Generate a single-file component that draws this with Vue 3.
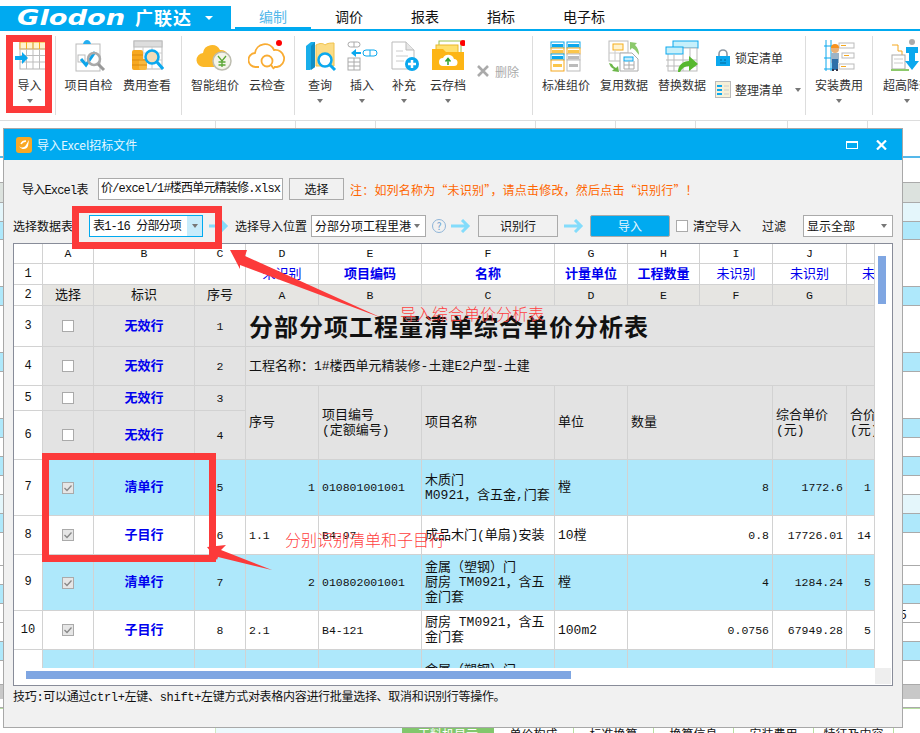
<template>
  <div class="app">
    <!-- 顶部标签 -->
    <header class="topbar">
      <div class="logo">
        <span class="logo-en">Glodon</span>
        <span class="logo-cn">广联达</span>
        <i class="logo-caret"></i>
      </div>
      <nav class="tabs">
        <a v-for="(t, i) in tabs" :key="t" :class="['tab', { active: i === 0, wide: i === 4 }]">{{ t }}</a>
      </nav>
    </header>

    <!-- 功能区 -->
    <section class="ribbon">
      <div class="tool w43">
        <svg viewBox="0 0 34 34" class="ico">
          <rect x="7" y="3" width="26" height="27" fill="#fff" stroke="#b5b5b5" />
          <rect x="7" y="3" width="26" height="7" fill="#fff3cf" stroke="#f5ae1e" />
          <path d="M13.5 3v27M20 3v27M26.500 3v27M7 10h26M7 16.500h26M7 23h26" stroke="#bdbdbd" fill="none" />
          <path d="M13.500 3v7M20 3v7M26.500 3v7" stroke="#f5ae1e" />
          <path d="M2 17h7v-4l6 6-6 6v-4H2z" fill="#0ba8ee" />
        </svg>
        <span>导入</span><i class="caret"></i>
      </div>
      <div class="sep"></div>
      <div class="tool w57">
        <svg viewBox="0 0 34 34" class="ico">
          <rect x="4" y="5" width="24" height="27" fill="#fff" stroke="#bbb" />
          <path d="M11 5c1-3 2-4 4-4s3 1 4 4z" fill="#25aef0" />
          <rect x="6" y="16" width="7" height="7" fill="#fff" stroke="#bbb" />
          <path d="M9 20l5 6 9-13" fill="none" stroke="#0ea5ea" stroke-width="3" />
          <circle cx="22" cy="20" r="6" fill="none" stroke="#aaa" stroke-width="2.500" />
          <path d="M26 25l6 6" stroke="#999" stroke-width="3" />
        </svg>
        <span>项目自检</span>
      </div>
      <div class="tool w60">
        <svg viewBox="0 0 34 34" class="ico">
          <rect x="4" y="2" width="28" height="28" fill="#fff" stroke="#bbb" />
          <rect x="4" y="2" width="28" height="6" fill="#ddd" stroke="#bbb" />
          <path d="M4 14h28M4 21h28M13 8v22M22 8v22" stroke="#ccc" />
          <rect x="2" y="11" width="11" height="20" rx="2" fill="#f7a820" />
          <rect x="9" y="20" width="8" height="11" rx="2" fill="#f9b93f" />
          <path d="M2 16h11M2 21h15M2 26h15" stroke="#d98a10" />
          <circle cx="22" cy="18" r="6.500" fill="#f4dcb8" stroke="#0ba8ee" stroke-width="2.500" />
          <path d="M27 23l6 7" stroke="#0ba8ee" stroke-width="3" />
        </svg>
        <span>费用查看</span>
      </div>
      <div class="sep"></div>
      <div class="tool w58">
        <svg viewBox="0 0 38 34" class="ico wide-ico">
          <path d="M8 28a7 7 0 0 1-1-14 9 9 0 0 1 17-3 8 8 0 0 1 8 5v12z" fill="#fbb829" />
          <circle cx="26" cy="22" r="9" fill="#f4f4ea" stroke="#bdbdb0" stroke-width="1.500" />
          <path d="M22 17l4 5 4-5M26 22v6M22.500 23h7M22.500 26h7" stroke="#5aa735" stroke-width="1.300" fill="none" />
        </svg>
        <span>智能组价</span>
      </div>
      <div class="tool w46">
        <svg viewBox="0 0 38 34" class="ico wide-ico">
          <path d="M11 28H8a7 7 0 0 1-1-14 10 10 0 0 1 19-3 8.500 8.500 0 0 1 3 17h-3" fill="none" stroke="#f9ac33" stroke-width="1.800" />
          <circle cx="19" cy="22" r="5.500" fill="none" stroke="#f9ac33" stroke-width="1.800" />
          <path d="M23 26l3 4" stroke="#f9ac33" stroke-width="2" />
          <circle cx="31" cy="4" r="3" fill="#f00" />
        </svg>
        <span>云检查</span>
      </div>
      <div class="sep"></div>
      <div class="tool w42">
        <svg viewBox="0 0 34 34" class="ico">
          <path d="M3 7l5-4h4v25l-5 3H3z" fill="#19aeea" />
          <path d="M8 7l4-4v25l-4 3z" fill="#0f8ec4" />
          <path d="M13 6c4-2 7-2 9 0 2-2 6-2 9-2v23H13z" fill="#fbdc86" stroke="#f0c24b" />
          <circle cx="22" cy="21" r="6.500" fill="#fff" stroke="#0ba8ee" stroke-width="2.500" />
          <path d="M27 26l5 5" stroke="#0ba8ee" stroke-width="3" />
        </svg>
        <span>查询</span><i class="caret"></i>
      </div>
      <div class="tool w42">
        <svg viewBox="0 0 34 34" class="ico">
          <rect x="3" y="3" width="12" height="5" rx="2.500" fill="#fff" stroke="#aaa" />
          <path d="M9 3v5" stroke="#aaa" />
          <path d="M6 14l5-4v3h5v2h-5v3z" fill="#0ba8ee" />
          <rect x="18" y="11" width="14" height="6" rx="3" fill="#fff" stroke="#0ba8ee" />
          <path d="M25 11v6" stroke="#0ba8ee" />
          <rect x="3" y="19" width="12" height="12" fill="#fff" stroke="#aaa" />
          <path d="M3 23h12M3 27h12M9 19v12" stroke="#aaa" />
        </svg>
        <span>插入</span><i class="caret"></i>
      </div>
      <div class="tool w42">
        <svg viewBox="0 0 34 34" class="ico">
          <path d="M5 3h14l8 8v19H5z" fill="#fff" stroke="#bbb" />
          <path d="M19 3v8h8" fill="#e6e6e6" stroke="#bbb" />
          <path d="M9 12h7M9 17h12M9 22h8" stroke="#ccc" />
          <circle cx="25" cy="25" r="7" fill="#0ba8ee" />
          <path d="M21 25h8M25 21v8" stroke="#fff" stroke-width="2.500" />
        </svg>
        <span>补充</span><i class="caret"></i>
      </div>
      <div class="tool w46">
        <svg viewBox="0 0 34 34" class="ico">
          <rect x="8" y="2" width="22" height="14" fill="#fff" stroke="#9bc24a" />
          <rect x="5" y="6" width="22" height="12" fill="#ffe06e" stroke="#e9b82c" />
          <path d="M1 10h11l3 3h18v18H1z" fill="#fdb515" />
          <path d="M12 27a4 4 0 0 1 0-8 6 6 0 0 1 11 1 3.500 3.500 0 0 1 0 7z" fill="#fff" />
          <path d="M17 26v-6M14.500 22.500l2.500-3 2.500 3" stroke="#2ca02c" stroke-width="1.500" fill="none" />
          <circle cx="32" cy="4" r="3" fill="#f00" />
        </svg>
        <span>云存档</span><i class="caret"></i>
      </div>
      <div class="tool-inline w57">
        <svg viewBox="0 0 12 12" class="del"><path d="M1 1l10 10M11 1L1 11" stroke="#aaa" stroke-width="2.600" /></svg>
        <span>删除</span>
      </div>
      <div class="sep"></div>
      <div class="tool w58">
        <svg viewBox="0 0 34 34" class="ico">
          <g fill="#fff" stroke="#0ba8ee"><rect x="2" y="3" width="13" height="6" /><rect x="18" y="3" width="13" height="6" /></g>
          <rect x="3" y="5" width="11" height="3" fill="#0ba8ee" /><rect x="19" y="5" width="11" height="3" fill="#0ba8ee" />
          <g fill="#fff" stroke="#f5a81e"><rect x="2" y="9" width="13" height="6" /><rect x="18" y="9" width="13" height="6" /></g>
          <rect x="3" y="11" width="11" height="3" fill="#fbc64a" /><rect x="19" y="11" width="11" height="3" fill="#fbc64a" />
          <rect x="2" y="15" width="13" height="6" fill="#fff" stroke="#0ba8ee" /><rect x="3" y="17" width="11" height="3" fill="#0ba8ee" />
          <rect x="18" y="15" width="13" height="6" fill="#fff" stroke="#bbb" /><rect x="19" y="17" width="11" height="3" fill="#bbb" />
          <rect x="2" y="21" width="13" height="11" fill="#fff" stroke="#f5a81e" /><rect x="4" y="25" width="9" height="3" fill="#fbc64a" />
          <rect x="18" y="21" width="13" height="11" fill="#fff" stroke="#bbb" /><rect x="20" y="25" width="9" height="3" fill="#bbb" />
        </svg>
        <span>标准组价</span>
      </div>
      <div class="tool w58">
        <svg viewBox="0 0 34 34" class="ico">
          <rect x="2" y="2" width="19" height="20" fill="#fff" stroke="#bbb" />
          <rect x="6" y="5" width="10" height="6" fill="#fff3cf" stroke="#f5ae1e" />
          <path d="M2 14h19M8 11v11" stroke="#ccc" />
          <path d="M13 14h12l6 6v12H13z" fill="#fff" stroke="#aaa" />
          <rect x="17" y="18" width="9" height="4" fill="#c6ecfb" stroke="#0ba8ee" />
          <path d="M17 22v8h10v-8M22 22v8M17 26h10" stroke="#aaa" fill="none" />
          <path d="M23 3l7 1-2 2c3 3 4 6 4 10l-4-5-3-2-2 2z" fill="#8cc96b" />
          <path d="M2 24l3 1c1 2 2 3 4 4l2-2 1 6-7-1 2-2c-3-1-4-3-5-6z" fill="#6cb64a" />
        </svg>
        <span>复用数据</span>
      </div>
      <div class="tool w58">
        <svg viewBox="0 0 34 34" class="ico">
          <rect x="8" y="2" width="25" height="7" fill="#c6f0fb" stroke="#0ba8ee" />
          <rect x="3" y="9" width="29" height="23" fill="#fff" stroke="#bbb" />
          <rect x="1" y="8" width="17" height="7" fill="#c6f0fb" stroke="#0ba8ee" />
          <path d="M1 21h31M1 27h31M9 15v17M18 15v17M25 9v23" stroke="#bbb" />
          <path d="M13 33c0-7 5-11 11-11v-5l9 8-9 7v-5c-4 0-7 2-9 6z" fill="#57b82f" />
        </svg>
        <span>替换数据</span>
      </div>
      <div class="stack">
        <div class="stack-row">
          <svg viewBox="0 0 16 17" class="mini">
            <path d="M4 8V5a4 4 0 0 1 8 0v3" fill="none" stroke="#8a97a3" stroke-width="1.600" />
            <rect x="1" y="7" width="14" height="10" fill="#0ba8ee" />
            <path d="M5 11h2M9 11h2M5 14h6" stroke="#05689a" />
          </svg>
          <span>锁定清单</span>
        </div>
        <div class="stack-row">
          <svg viewBox="0 0 16 17" class="mini">
            <rect x="0.500" y="0.500" width="15" height="16" fill="#f6f0d8" stroke="#bbb" />
            <rect x="2" y="4" width="5" height="2" fill="#0ba8ee" /><rect x="2" y="8" width="5" height="2" fill="#0ba8ee" /><rect x="2" y="12" width="5" height="2" fill="#0ba8ee" />
            <path d="M9 5h5M9 9h5M9 13h5" stroke="#ccc" />
          </svg>
          <span>整理清单</span>
          <i class="caret side"></i>
        </div>
      </div>
      <div class="sep"></div>
      <div class="tool w58">
        <svg viewBox="0 0 34 34" class="ico">
          <path d="M4 1v31M9 1v31" stroke="#0ba8ee" />
          <path d="M2 7h9M2 19h9M2 30h9" stroke="#0ba8ee" />
          <rect x="17" y="4" width="15" height="5" fill="#fff" stroke="#bbb" /><path d="M19 6.500h5" stroke="#f5a81e" />
          <rect x="20" y="14" width="12" height="5" fill="#fff" stroke="#bbb" /><path d="M22 16.500h5" stroke="#f5a81e" />
          <rect x="17" y="25" width="15" height="5" fill="#fff" stroke="#bbb" /><path d="M19 27.500h5" stroke="#f5a81e" />
          <circle cx="13" cy="10" r="4" fill="#e8b27a" />
          <path d="M9 9a4 4 0 0 1 8 0z" fill="#f6921e" />
          <path d="M9 14h8v10H9z" fill="#9cb4c8" />
          <path d="M10 20h6v11h-6z" fill="#2d6fa8" />
          <path d="M10 31h2M14 31h2" stroke="#334" stroke-width="2" />
        </svg>
        <span>安装费用</span><i class="caret"></i>
      </div>
      <div class="sep"></div>
      <div class="tool w60">
        <svg viewBox="0 0 34 34" class="ico">
          <path d="M2 6h6v6h4v16" fill="none" stroke="#f5a81e" />
          <rect x="2" y="16" width="13" height="14" fill="#fff" stroke="#aaa" />
          <path d="M4 20h9M4 24h9" stroke="#ccc" />
          <path d="M1 31h18" stroke="#8cc96b" stroke-width="2" />
          <circle cx="22" cy="3" r="3" fill="#aaa" />
          <path d="M16 8h12v6h-3v8h4l-7 9-7-9h4v-8h-3z" fill="#0ba8ee" />
        </svg>
        <span>超高降效</span><i class="caret"></i>
      </div>
    </section>

    <!-- 被弹窗挡住的清单表 -->
    <section class="sheet">
      <div class="ruler"><i v-for="(w, i) in rulerCols" :key="i" :class="'rc' + w"></i></div>
      <div class="sheet-line"></div>
      <div
        v-for="(r, i) in sheetRows"
        :key="i"
        :class="['sheet-row', r.kind]"
        :style="{ height: r.h + 'px' }"
      >{{ r.text }}</div>
      <div class="bottom-tabs">
        <span class="bt-blank"></span>
        <span class="bt-panel"></span>
        <span class="bt on">工料机显示</span>
        <span class="bt">单价构成</span>
        <span class="bt">标准换算</span>
        <span class="bt">换算信息</span>
        <span class="bt">安装费用</span>
        <span class="bt">特征及内容</span>
        <span class="bt"></span>
      </div>
    </section>

    <!-- 弹窗 -->
    <div class="dialog">
      <div class="dlg-head">
        <svg viewBox="0 0 16 16" class="dlg-ico">
          <rect width="16" height="16" rx="3" fill="#f9a825" />
          <path d="M3 9c3 3 6 1 7-1l3-5-1 6c-1 3-6 5-9 0z" fill="#fff" />
          <path d="M5 7c1-2 3-3 5-3" stroke="#fff" stroke-width="1.500" fill="none" />
        </svg>
        <span class="dlg-title">导入Excel招标文件</span>
        <svg viewBox="0 0 12 8" class="win-max"><rect x="0.500" y="0.500" width="11" height="7" fill="none" stroke="#fff" /><rect width="12" height="2" fill="#fff" /></svg>
        <svg viewBox="0 0 11 10" class="win-close"><path d="M1 0.500l9 9M10 0.500l-9 9" stroke="#fff" stroke-width="2.200" /></svg>
      </div>

      <div class="form-row first">
        <span class="lbl-file">导入Excel表</span>
        <div class="file-input">价/excel/1#楼西单元精装修.xlsx</div>
        <button class="btn pick">选择</button>
        <span class="warn">注：如列名称为“未识别”，请点击修改，然后点击“识别行”！</span>
      </div>

      <div class="form-row second">
        <span class="lbl w60l">选择数据表</span>
        <div class="combo sel-a">
          <span>表1-16 分部分项</span>
          <b class="combo-btn"><i class="caret"></i></b>
        </div>
        <svg viewBox="0 0 20 14" class="flow a1"><path d="M0 7h17M11 1l6 6-6 6" fill="none" stroke="#84dcfb" stroke-width="3" /></svg>
        <span class="lbl pos">选择导入位置</span>
        <div class="combo sel-b"><span>分部分项工程里港</span><i class="caret"></i></div>
        <span class="help">?</span>
        <svg viewBox="0 0 20 14" class="flow a2"><path d="M0 7h17M11 1l6 6-6 6" fill="none" stroke="#84dcfb" stroke-width="3" /></svg>
        <button class="btn rec">识别行</button>
        <svg viewBox="0 0 20 14" class="flow a3"><path d="M0 7h17M11 1l6 6-6 6" fill="none" stroke="#84dcfb" stroke-width="3" /></svg>
        <button class="btn primary">导入</button>
        <i class="check clear"></i>
        <span class="lbl clear-t">清空导入</span>
        <span class="lbl filter">过滤</span>
        <div class="combo sel-c"><span>显示全部</span><i class="caret"></i></div>
      </div>

      <div class="frame">
        <div class="grid-wrap">
          <table class="grid">
            <colgroup>
              <col v-for="w in colWidths" :key="w.k" :style="{ width: w.v + 'px' }" />
            </colgroup>
            <tr class="r-head">
              <td class="rh"></td>
              <td v-for="(c, i) in letters" :key="i" class="letter">{{ c }}</td>
            </tr>
            <tr class="r1">
              <td class="rh">1</td><td></td><td></td><td></td>
              <td class="c un">未识别</td><td class="c key">项目编码</td><td class="c key">名称</td>
              <td class="c key">计量单位</td><td class="c key">工程数量</td>
              <td class="c un">未识别</td><td class="c un">未识别</td><td class="un cut">未识别</td>
            </tr>
            <tr class="r2 grey2">
              <td class="rh">2</td><td class="c">选择</td><td class="c">标识</td><td class="c">序号</td>
              <td v-for="c in subLetters" :key="c" class="letter">{{ c }}</td><td></td>
            </tr>
            <tr class="r3 grey">
              <td class="rh">3</td><td><i class="check"></i></td><td class="c key">无效行</td><td class="c num">1</td>
              <td colspan="8" class="title">分部分项工程量清单综合单价分析表</td>
            </tr>
            <tr class="r4 grey">
              <td class="rh">4</td><td><i class="check"></i></td><td class="c key">无效行</td><td class="c num">2</td>
              <td colspan="8">工程名称：1#楼西单元精装修-土建E2户型-土建</td>
            </tr>
            <tr class="r5 grey">
              <td class="rh">5</td><td><i class="check"></i></td><td class="c key">无效行</td><td class="c num">3</td>
              <td rowspan="2">序号</td><td rowspan="2">项目编号<br />(定额编号)</td><td rowspan="2">项目名称</td>
              <td rowspan="2">单位</td><td rowspan="2" colspan="2">数量</td>
              <td rowspan="2">综合单价<br />(元)</td><td rowspan="2">合价<br />(元)</td>
            </tr>
            <tr class="r6 grey">
              <td class="rh">6</td><td><i class="check"></i></td><td class="c key">无效行</td><td class="c num">4</td>
            </tr>
            <tr v-for="(row, i) in dataRows" :key="i" :class="{ blue: row.blue }" :style="{ height: row.h + 'px' }">
              <td class="rh">{{ row.no }}</td>
              <td><i v-if="row.tag" class="check on"><svg viewBox="0 0 10 10"><path d="M1.500 5l2.500 2.500 4.500-5" fill="none" stroke="#888" stroke-width="1.300" /></svg></i></td>
              <td class="c key">{{ row.tag }}</td>
              <td class="c num">{{ row.seq }}</td>
              <td :class="row.parent ? 'r num' : 'num'">{{ row.d }}</td>
              <td class="num">{{ row.e }}</td>
              <td class="multi">{{ row.f }}</td>
              <td>{{ row.g }}</td>
              <td colspan="2" class="r num">{{ row.h2 }}</td>
              <td class="r num">{{ row.j }}</td>
              <td class="r num">{{ row.k }}</td>
            </tr>
          </table>
        </div>
        <div class="vbar"><i></i></div>
        <div class="hbar"><i></i></div>
        <div class="corner"></div>
      </div>

      <p class="tip">技巧:可以通过ctrl+左键、shift+左键方式对表格内容进行批量选择、取消和识别行等操作。</p>
    </div>

    <!-- 截图上的红色标注 -->
    <svg class="marks" viewBox="0 0 920 733">
      <g fill="none" stroke="#fc3a3a" stroke-width="7">
        <rect x="9.500" y="38.500" width="39" height="71" />
        <rect x="75.500" y="209.500" width="143" height="36" />
        <rect x="45.500" y="456.500" width="167" height="102" />
      </g>
      <path d="M230 250l17 0-2 6 137 62-142-53 0 4z" fill="#fc3a3a" />
      <path d="M207 547l19-2-5 5 51 20-54-13-1 3z" fill="#fc3a3a" />
    </svg>
    <span class="mark-text t1">导入综合单价分析表</span>
    <span class="mark-text t2">分别识别清单和子目行</span>
  </div>
</template>

<script setup>
const tabs = ['编制', '调价', '报表', '指标', '电子标']

const rulerCols = [215, 80, 80, 160, 80, 80, 92, 80, 53]

const sheetRows = [
  { h: 25, kind: 'plain', text: ':' },
  { h: 20, kind: 'head' },
  { h: 19, kind: 'light' },
  { h: 18, kind: 'sky' },
  { h: 47, kind: 'plain' },
  { h: 19, kind: 'sky' },
  { h: 47, kind: 'plain' },
  { h: 19, kind: 'sky' },
  { h: 47, kind: 'plain' },
  { h: 19, kind: 'sky' },
  { h: 19, kind: 'plain' },
  { h: 19, kind: 'sky' },
  { h: 19, kind: 'plain' },
  { h: 19, kind: 'light' },
  { h: 19, kind: 'sky' },
  { h: 33, kind: 'plain' },
  { h: 19, kind: 'plain' },
  { h: 19, kind: 'sky' },
  { h: 19, kind: 'plain', text: '5' },
  { h: 19, kind: 'plain' },
  { h: 19, kind: 'sky' },
  { h: 24, kind: 'plain' },
  { h: 14, kind: 'foot' },
  { h: 9, kind: 'plain' }
]

const colWidths = [29, 51, 101, 51, 73, 103, 133, 73, 72, 73, 74, 28].map((v, k) => ({ k, v }))
const letters = ['A', 'B', 'C', 'D', 'E', 'F', 'G', 'H', 'I', 'J', '']
const subLetters = ['A', 'B', 'C', 'D', 'E', 'F', 'G']

const dataRows = [
  { no: 7, h: 56, blue: true, parent: true, tag: '清单行', seq: 5, d: '1', e: '010801001001', f: '木质门\nM0921，含五金,门套', g: '樘', h2: '8', j: '1772.6', k: '1' },
  { no: 8, h: 39, tag: '子目行', seq: 6, d: '1.1', e: 'B4-97', f: '成品木门(单扇)安装', g: '10樘', h2: '0.8', j: '17726.01', k: '14' },
  { no: 9, h: 56, blue: true, parent: true, tag: '清单行', seq: 7, d: '2', e: '010802001001', f: '金属（塑钢）门\n厨房 TM0921，含五\n金门套', g: '樘', h2: '4', j: '1284.24', k: '5' },
  { no: 10, h: 39, tag: '子目行', seq: 8, d: '2.1', e: 'B4-121', f: '厨房 TM0921，含五\n金门套', g: '100m2', h2: '0.0756', j: '67949.28', k: '5' },
  { no: '', h: 56, blue: true, tag: '', seq: '', d: '', e: '', f: '金属（塑钢）门\n \n ', g: '', h2: '', j: '', k: '' }
]
</script>

<style>
html, body {
  margin: 0;
  background: #fff;
}
</style>

<style scoped>
.app {
  position: relative;
  width: 920px;
  height: 733px;
  overflow: hidden;
  background: #fff;
  color: #333;
  font: 12px "Noto Sans CJK SC", "Liberation Sans", sans-serif;
}

/* === 顶部 === */
.topbar {
  display: flex;
  height: 31px;
  box-sizing: border-box;
  padding-top: 6px;
  border-bottom: 2px solid #00aaf0;
}
.logo {
  display: flex;
  align-items: center;
  width: 231px;
  padding-left: 17px;
  box-sizing: border-box;
  background: #00aaf0;
  color: #fff;
  white-space: nowrap;
}
.logo-en {
  font: italic 700 22px/23px "DejaVu Sans", sans-serif;
  width: 118px;
  transform-origin: left center;
  transform: scaleX(1.24);
}
.logo-cn {
  font-size: 18px;
  line-height: 23px;
  font-weight: 700;
  letter-spacing: 1px;
}
.logo-caret {
  width: 0;
  height: 0;
  margin-left: 13px;
  border: 4px solid transparent;
  border-top-color: #fff;
  border-bottom: 0;
}
.tabs {
  display: flex;
  padding-left: 4px;
}
.tab {
  width: 76px;
  height: 23px;
  line-height: 21px;
  text-align: center;
  font-size: 14px;
  color: #111;
}
.tab.wide {
  width: 90px;
}
.tab.active {
  box-sizing: border-box;
  color: #55b8ea;
  border-bottom: 2px solid #00aaf0;
}

/* === 功能区 === */
.ribbon {
  display: flex;
  height: 90px;
  box-sizing: border-box;
  padding: 5px 0 5px 8px;
  border-bottom: 1px solid #ddd;
  overflow: hidden;
}
.sep {
  flex: none;
  width: 1px;
  margin: 0 4px;
  background: #ddd;
}
.tool {
  flex: none;
  display: flex;
  flex-direction: column;
  align-items: center;
  padding-top: 3px;
  white-space: nowrap;
}
.tool > span {
  margin-top: 4px;
  line-height: 16px;
}
.w42 { width: 42px; }
.w43 { width: 43px; }
.w46 { width: 46px; }
.w57 { width: 57px; }
.w58 { width: 58px; }
.w60 { width: 60px; }
.ico {
  width: 34px;
  height: 34px;
  flex: none;
}
.wide-ico {
  width: 38px;
}
.caret {
  display: block;
  width: 0;
  height: 0;
  border: 3.5px solid transparent;
  border-top: 4px solid #777;
  border-bottom: 0;
}
.tool .caret {
  margin-top: 6px;
}
.tool-inline {
  flex: none;
  display: flex;
  align-items: center;
  box-sizing: border-box;
  padding: 0 0 9px 6px;
  color: #aaa;
}
.del {
  width: 12px;
  height: 12px;
  margin-right: 6px;
}
.stack {
  flex: none;
  width: 90px;
  box-sizing: border-box;
  padding: 13px 0 0 4px;
}
.stack-row {
  display: flex;
  align-items: center;
  height: 17px;
  margin-bottom: 15px;
}
.mini {
  width: 16px;
  height: 17px;
  margin-right: 4px;
}
.caret.side {
  margin-left: 12px;
}

/* === 背景表格 === */
.ruler {
  display: flex;
  height: 35px;
}
.ruler i {
  display: block;
  flex: none;
  box-sizing: border-box;
  border-right: 1px solid #ddd;
}
.rc215 { width: 216px; }
.rc80 { width: 80px; }
.rc160 { width: 160px; }
.rc92 { width: 92px; }
.rc53 { width: 53px; }
.sheet-line {
  height: 2px;
  background: #55b8ea;
}
.sheet-row {
  display: flex;
  align-items: center;
  box-sizing: border-box;
  padding-left: 900px;
  border-bottom: 1px solid #aaa;
  color: #111;
  white-space: nowrap;
}
.sheet-row.plain { background: #fff; }
.sheet-row.head { background: #dce2de; }
.sheet-row.light { background: #e4f6fb; }
.sheet-row.sky { background: #aee8fb; }
.sheet-row.foot {
  background: #c8c8c8;
  border-bottom: 0;
}
.bottom-tabs {
  display: flex;
  height: 40px;
  border-top: 1px solid #b7dfa0;
}
.bt-blank {
  flex: none;
  width: 215px;
}
.bt-panel {
  flex: none;
  width: 187px;
  box-sizing: border-box;
  background: #edf9fd;
  border-left: 1px solid #cfe9c0;
}
.bt {
  flex: none;
  width: 80px;
  box-sizing: border-box;
  padding-top: 16px;
  text-align: center;
  border-right: 1px solid #b7dfa0;
  color: #111;
  white-space: nowrap;
}
.bt.on {
  width: 92px;
  background: #82c76c;
  color: #fff;
  border-right: 0;
}

/* === 弹窗 === */
.dialog {
  position: absolute;
  left: 3px;
  top: 128px;
  width: 900px;
  height: 600px;
  box-sizing: border-box;
  border: 1px solid #a8a8a8;
  background: #f1f1f1;
  color: #111;
}
.dlg-head {
  display: flex;
  align-items: center;
  height: 31px;
  background: #00aaf0;
  color: #e4f7ff;
}
.dlg-ico {
  width: 16px;
  height: 16px;
  margin: 0 5px 0 12px;
}
.dlg-title {
  flex: 1;
}
.win-max {
  width: 12px;
  height: 8px;
  margin-right: 18px;
}
.win-close {
  width: 11px;
  height: 10px;
  margin-right: 15px;
}
.form-row {
  display: flex;
  align-items: center;
  height: 22px;
  white-space: nowrap;
}
.form-row.first {
  margin-top: 18px;
  padding-left: 18px;
}
.form-row.second {
  margin-top: 15px;
  padding-left: 9px;
}
.lbl-file {
  width: 76px;
  font-family: "Liberation Mono", "Noto Sans CJK SC", monospace;
  letter-spacing: -0.8px;
}
.file-input {
  width: 185px;
  height: 22px;
  box-sizing: border-box;
  padding: 0 2px;
  line-height: 20px;
  border: 1px solid #aaa;
  background: #fff;
  font-family: "Liberation Mono", "Noto Sans CJK SC", monospace;
  letter-spacing: -0.8px;
  overflow: hidden;
}
.btn {
  height: 22px;
  padding: 0 0 2px;
  box-sizing: border-box;
  border: 1px solid #aaa;
  background: #f1f1f1;
  color: #111;
  font: 12px "Noto Sans CJK SC", sans-serif;
}
.btn.pick {
  width: 55px;
  margin-left: 6px;
}
.warn {
  margin-left: 6px;
  color: #ff6600;
  letter-spacing: 0.2px;
}
.lbl {
  flex: none;
  padding-bottom: 2px;
}
.w60l { width: 60px; }
.combo {
  flex: none;
  display: flex;
  align-items: center;
  height: 22px;
  box-sizing: border-box;
  padding-left: 3px;
  border: 1px solid #aaa;
  background: #fff;
  overflow: hidden;
}
.combo > span {
  flex: 1;
  padding-bottom: 2px;
  overflow: hidden;
}
.combo .caret {
  margin-right: 5px;
}
.sel-a {
  width: 114px;
  margin-left: 16px;
  border-color: #00aaf0;
  white-space: pre;
  font-family: "Liberation Mono", "Noto Sans CJK SC", monospace;
  letter-spacing: -0.8px;
}
.combo-btn {
  display: flex;
  align-items: center;
  justify-content: center;
  flex: none;
  width: 15px;
  height: 100%;
  background: #c8ecfb;
}
.combo-btn .caret {
  margin: 0;
}
.flow {
  flex: none;
  width: 20px;
  height: 14px;
}
.flow.a1 { margin-left: 6px; }
.lbl.pos { margin-left: 6px; }
.sel-b {
  width: 115px;
  margin-left: 4px;
}
.help {
  flex: none;
  width: 14px;
  height: 14px;
  margin-left: 6px;
  box-sizing: border-box;
  border: 1px solid #8fb5d8;
  border-radius: 50%;
  color: #6a9fd0;
  font-size: 10px;
  line-height: 12px;
  text-align: center;
}
.flow.a2 { margin-left: 5px; }
.btn.rec {
  width: 80px;
  margin-left: 7px;
}
.flow.a3 { margin-left: 6px; }
.btn.primary {
  width: 80px;
  margin-left: 6px;
  background: #00aaf0;
  color: #e4f7ff;
  border-radius: 2px;
}
.check {
  display: block;
  width: 12px;
  height: 12px;
  margin: 0 auto;
  box-sizing: border-box;
  border: 1px solid #aaa;
  background: #fff;
}
.check.on {
  background: #e6e6e6;
}
.check svg {
  display: block;
  width: 10px;
  height: 10px;
}
.check.clear {
  flex: none;
  margin: 0 0 0 6px;
}
.lbl.clear-t { margin-left: 5px; }
.lbl.filter { margin-left: 21px; }
.sel-c {
  width: 90px;
  margin-left: 17px;
}

/* === 表格 === */
.frame {
  display: grid;
  grid-template-columns: 861px 1fr;
  grid-template-rows: 424px 1fr;
  width: 880px;
  height: 443px;
  box-sizing: border-box;
  margin: 6px 0 0 9px;
  border: 1px solid #888c99;
  background: #fff;
}
.grid-wrap {
  overflow: hidden;
}
.grid {
  width: 861px;
  margin: -1px 0 0 -1px;
  table-layout: fixed;
  border-collapse: collapse;
  font: 13px/15px "Liberation Mono", "Noto Sans CJK SC", monospace;
  color: #111;
}
.grid td {
  padding: 0 3px;
  border: 1px solid #d2d2d2;
  overflow: hidden;
  white-space: nowrap;
}
.r-head { height: 20px; }
.r1 { height: 21px; }
.r2 { height: 21px; }
.r3 { height: 41px; }
.r4 { height: 39px; }
.r5 { height: 25px; }
.r6 { height: 49px; }
.grid .rh {
  padding: 0;
  background: #fff;
  text-align: center;
  font-size: 12px;
}
.grey td { background: #e3e3e3; }
.grey2 td { background: #e6e5e2; }
.blue td { background: #aee8fb; }
.grid .blue .rh,
.grid .grey .rh,
.grid .grey2 .rh {
  background: #fff;
}
.c { text-align: center; }
.r { text-align: right; }
.letter {
  text-align: center;
  font-size: 11.5px;
}
.num {
  font-size: 11.5px;
}
.un {
  color: #0000ee;
}
.key {
  color: #0000ee;
  font-weight: 700;
}
.grid .cut {
  padding-left: 15px;
}
.title {
  font-family: "Noto Sans CJK SC", sans-serif;
  font-size: 24px;
  line-height: 30px;
  font-weight: 700;
  letter-spacing: 1px;
}
.multi {
  white-space: pre-line !important;
}
.vbar {
  grid-column: 2;
  grid-row: 1;
}
.vbar i {
  display: block;
  width: 8px;
  height: 48px;
  margin: 12px 0 0 3px;
  background: #7fa6e2;
}
.hbar {
  grid-column: 1;
  grid-row: 2;
}
.hbar i {
  display: block;
  width: 545px;
  height: 8px;
  margin: 3px 0 0 12px;
  background: #7fa6e2;
}
.corner {
  grid-column: 2;
  grid-row: 2;
  margin: 0 1px 1px 0;
  background: #eee;
}
.tip {
  margin: 4px 0 0 9px;
  font: 12px/16px "Liberation Mono", "Noto Sans CJK SC", monospace;
  letter-spacing: -0.3px;
  white-space: nowrap;
}

/* === 红色标注 === */
.marks {
  position: absolute;
  left: 0;
  top: 0;
  width: 920px;
  height: 733px;
  pointer-events: none;
}
.mark-text {
  position: absolute;
  color: #ff4040;
  font-size: 16px;
  line-height: 20px;
  font-weight: 300;
  white-space: nowrap;
}
.t1 { left: 400px; top: 303px; }
.t2 { left: 285px; top: 529px; }
</style>
